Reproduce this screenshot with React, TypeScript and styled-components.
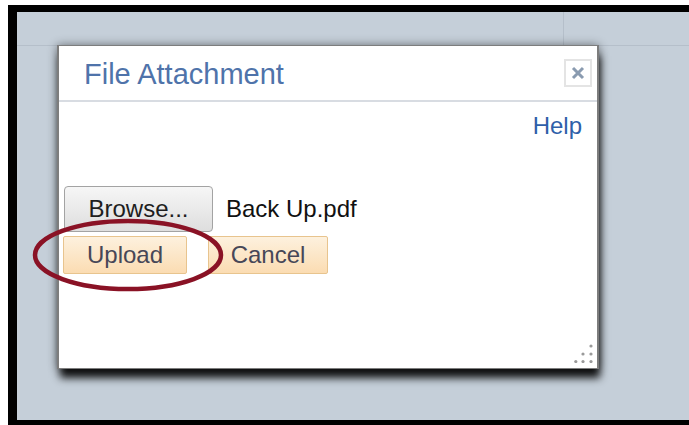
import styled, { createGlobalStyle } from "styled-components";

const GlobalStyle = createGlobalStyle`
  body {
    margin: 0;
    background: #ffffff;
    font-family: "Liberation Sans", Arial, sans-serif;
  }
`;

export default function App() {
  return (
    <Page>
      <GlobalStyle />
      <Screen>
        <Dialog>
          <Header>
            <Title>File Attachment</Title>
            <CloseButton aria-label="Close">
              <svg width="14" height="14" viewBox="0 0 14 14">
                <path d="M2 2 L12 12 M12 2 L2 12" stroke="#8a9bb0" strokeWidth="3" />
              </svg>
            </CloseButton>
          </Header>
          <Body>
            <HelpRow>
              <HelpLink>Help</HelpLink>
            </HelpRow>
            <FileRow>
              <BrowseButton>Browse...</BrowseButton>
              <FileName>Back Up.pdf</FileName>
            </FileRow>
            <ActionRow>
              <ActionButton $width={124}>Upload</ActionButton>
              <ActionButton $width={120}>Cancel</ActionButton>
            </ActionRow>
          </Body>

          {/* red ring drawn around the Upload button */}
          <Ring width="196" height="76" viewBox="0 0 196 76">
            <ellipse cx="98" cy="38" rx="93" ry="34" fill="none" stroke="#8a1225" strokeWidth="4.5" />
          </Ring>

          <Grip width="20" height="20" viewBox="0 0 20 20">
            <circle cx="17" cy="3" r="1.6" fill="#9a9a9a" />
            <circle cx="9" cy="11" r="1.6" fill="#9a9a9a" />
            <circle cx="17" cy="11" r="1.6" fill="#9a9a9a" />
            <circle cx="1.8" cy="18.5" r="1.6" fill="#9a9a9a" />
            <circle cx="9" cy="18.5" r="1.6" fill="#9a9a9a" />
            <circle cx="17" cy="18.5" r="1.6" fill="#9a9a9a" />
          </Grip>
        </Dialog>
      </Screen>
    </Page>
  );
}

const Page = styled.div`
  width: 689px;
  height: 425px;
  box-sizing: border-box;
  padding: 5px 0 0 8px;
  overflow: hidden;
`;

const Screen = styled.div`
  height: 420px;
  box-sizing: border-box;
  border-top: 7px solid #000;
  border-left: 9px solid #000;
  border-bottom: 5px solid #000;
  padding: 33px 0 0 40px;
  background-color: #c5cfd9;
  background-image: linear-gradient(#b5bfca, #b5bfca), linear-gradient(#b5bfca, #b5bfca);
  background-size: 100% 1px, 1px 33px;
  background-position: 0 33px, 546px 0;
  background-repeat: no-repeat;
`;

const Dialog = styled.div`
  position: relative;
  width: 542px;
  height: 324px;
  box-sizing: border-box;
  background: #fff;
  border: 1px solid #7d7d7d;
  border-left-width: 2px;
  border-right-width: 2px;
  box-shadow: 0 0 9px rgba(0, 0, 0, 0.45), 2px 10px 8px -1px rgba(0, 0, 0, 0.9);
`;

const Header = styled.div`
  display: flex;
  align-items: center;
  justify-content: space-between;
  height: 56px;
  box-sizing: border-box;
  padding: 0 5px 0 25px;
  border-bottom: 2px solid #d8dce2;
`;

const Title = styled.div`
  font-size: 29px;
  margin-top: 3px;
  color: #4f73aa;
`;

const CloseButton = styled.div`
  display: flex;
  align-items: center;
  justify-content: center;
  width: 28px;
  height: 28px;
  box-sizing: border-box;
  border: 2px solid #e4e4e4;
`;

const Body = styled.div`
  padding: 10px 15px 0 5px;
`;

const HelpRow = styled.div`
  display: flex;
  justify-content: flex-end;
`;

const HelpLink = styled.span`
  font-size: 24px;
  line-height: 28px;
  color: #2f5fa9;
`;

const FileRow = styled.div`
  display: flex;
  align-items: center;
  gap: 13px;
  margin-top: 46px;
`;

const BrowseButton = styled.div`
  display: flex;
  align-items: center;
  justify-content: center;
  width: 149px;
  height: 46px;
  box-sizing: border-box;
  border: 1px solid #a3a3a3;
  border-radius: 4px;
  background: linear-gradient(#f6f6f6, #dedede);
  font-size: 24px;
  color: #1e1e1e;
`;

const FileName = styled.span`
  font-size: 24px;
  color: #111;
`;

const ActionRow = styled.div`
  display: flex;
  gap: 21px;
  margin-top: 4px;
  margin-left: -1px;
`;

const ActionButton = styled.div<{ $width: number }>`
  display: flex;
  align-items: center;
  justify-content: center;
  width: ${(p) => p.$width}px;
  height: 38px;
  box-sizing: border-box;
  border: 1px solid #e8c48e;
  border-radius: 2px;
  background: linear-gradient(#fdf1de, #fbdcb2);
  font-size: 24px;
  color: #474757;
`;

const Ring = styled.svg`
  position: absolute;
  left: -29px;
  top: 171px;
`;

const Grip = styled.svg`
  position: absolute;
  right: 3px;
  bottom: 5px;
`;
